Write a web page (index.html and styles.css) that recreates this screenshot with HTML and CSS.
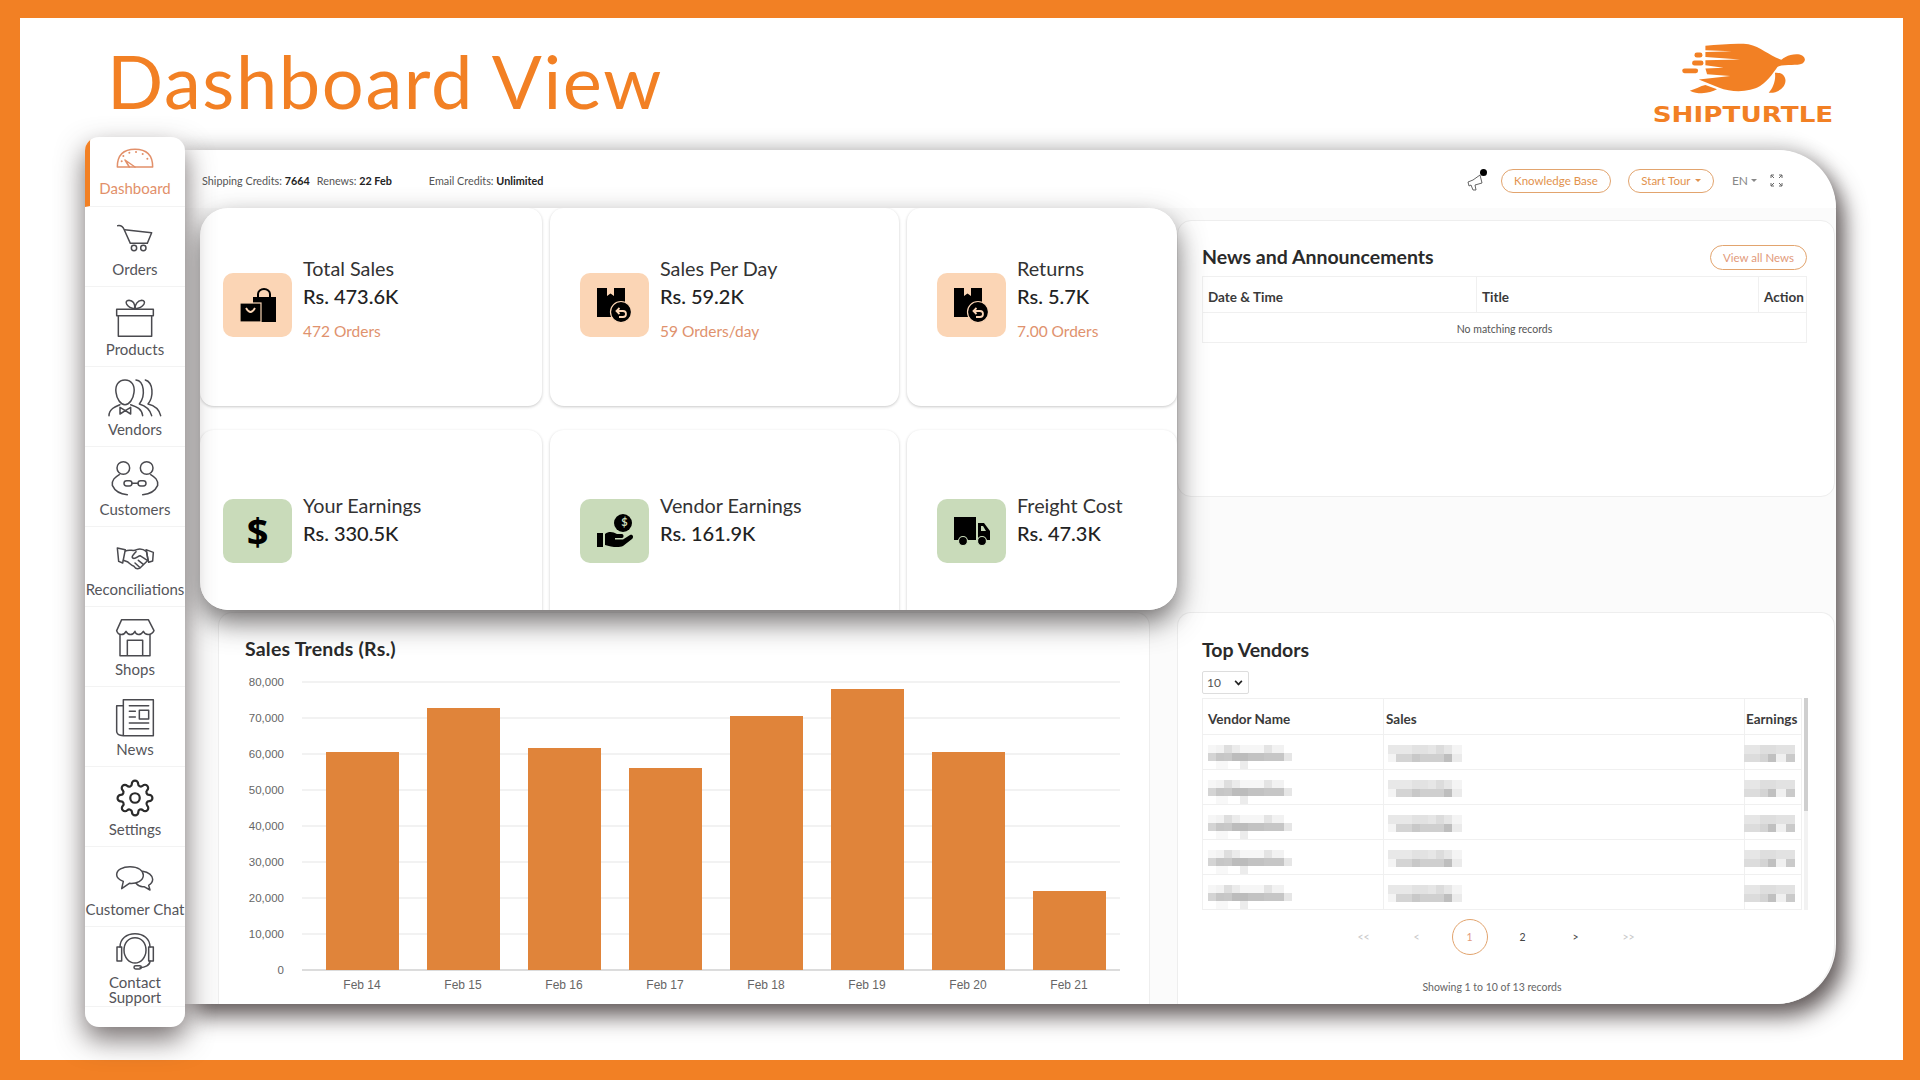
FILE: index.html
```html
<!DOCTYPE html>
<html lang="en">
<head>
    <meta charset="UTF-8">
    <title>Dashboard View</title>
    <link rel="stylesheet" href="styles.css">
</head>
<body>
<svg class="defs" width="0" height="0">
    <symbol id="blur-name" viewBox="0 0 84 24">
        <rect x="0" width="8" height="8" fill="#f6f6f6"/><rect x="8" width="8" height="8" fill="#f2f2f2"/><rect x="16" width="8" height="8" fill="#dedede"/><rect x="24" width="8" height="8" fill="#ebebeb"/><rect x="32" width="24" height="8" fill="#f6f6f6"/><rect x="56" width="8" height="8" fill="#e4e4e4"/><rect x="64" width="12" height="8" fill="#f2f2f2"/>
        <rect x="0" y="8" width="8" height="8" fill="#d4d4d4"/><rect x="8" y="8" width="8" height="8" fill="#c6c6c6"/><rect x="16" y="8" width="8" height="8" fill="#c8c8c8"/><rect x="24" y="8" width="16" height="8" fill="#bcbcbc"/><rect x="40" y="8" width="16" height="8" fill="#c2c2c2"/><rect x="56" y="8" width="20" height="8" fill="#c6c6c6"/><rect x="76" y="8" width="8" height="8" fill="#e6e6e6"/>
        <rect x="8" y="16" width="12" height="8" fill="#f8f8f8"/><rect x="32" y="16" width="8" height="8" fill="#ececec"/>
    </symbol>
    <symbol id="blur-sales" viewBox="0 0 74 17">
        <rect x="0" width="24" height="9" fill="#e8e8e8"/><rect x="24" width="16" height="9" fill="#e2e2e2"/><rect x="40" width="8" height="9" fill="#e6e6e6"/><rect x="48" width="8" height="9" fill="#dcdcdc"/><rect x="56" width="8" height="9" fill="#e6e6e6"/><rect x="64" width="10" height="9" fill="#f4f4f4"/>
        <rect x="0" y="9" width="8" height="8" fill="#f4f4f4"/><rect x="8" y="9" width="16" height="8" fill="#d4d4d4"/><rect x="24" y="9" width="8" height="8" fill="#c8c8c8"/><rect x="32" y="9" width="24" height="8" fill="#cfcfcf"/><rect x="56" y="9" width="8" height="8" fill="#bebebe"/><rect x="64" y="9" width="10" height="8" fill="#ebebeb"/>
    </symbol>
    <symbol id="blur-earn" viewBox="0 0 51 17">
        <rect x="0" width="16" height="9" fill="#e6e6e6"/><rect x="16" width="16" height="9" fill="#dedede"/><rect x="32" width="19" height="9" fill="#e2e2e2"/>
        <rect x="0" y="9" width="16" height="8" fill="#dcdcdc"/><rect x="16" y="9" width="8" height="8" fill="#d4d4d4"/><rect x="24" y="9" width="8" height="8" fill="#c0c0c0"/><rect x="32" y="9" width="10" height="8" fill="#f0f0f0"/><rect x="42" y="9" width="9" height="8" fill="#cacaca"/>
    </symbol>
</svg>

<div class="frame">
    <div class="stage">
        <!-- Heading and logo -->
        <header class="head">
            <h1 class="page-title">Dashboard View</h1>
            <div class="logo">
                <svg class="logo-mark" viewBox="840 125 380 160">
                    <path class="logo-fill" d="M915 136 C960 133 1010 128 1045 132 C1085 140 1110 170 1150 180 C1125 205 1115 235 1080 258 C1050 275 1000 280 955 262 L895 238 L990 228 L920 222 L915 205 L970 203 L915 195 L915 180 L1020 178 L915 170 L915 155 L995 153 L915 150 Z"/>
                    <path class="logo-fill" d="M1130 200 C1140 175 1165 160 1195 162 C1215 165 1222 180 1208 190 C1190 198 1160 190 1130 200 Z"/>
                    <path class="logo-fill" d="M1125 218 C1150 215 1165 235 1152 258 C1140 275 1120 280 1106 278 C1120 262 1128 240 1125 218 Z"/>
                    <path class="logo-fill" d="M868 272 C885 268 900 258 915 255 L950 268 C930 280 895 285 868 272 Z"/>
                    <rect class="logo-fill" x="882" y="157" width="24" height="15" rx="7"/>
                    <rect class="logo-fill" x="875" y="181" width="34" height="15" rx="7"/>
                    <rect class="logo-fill" x="845" y="205" width="48" height="14" rx="7"/>
                </svg>
                <div class="logo-text">SHIPTURTLE</div>
            </div>
        </header>

        <div class="workspace">
            <!-- Sidebar -->
            <nav class="sidebar">
                <a class="nav-item active">
                    <svg class="nav-icon gauge" viewBox="132 15 126 126">
                        <path d="M142 105 Q142 52 195 52 Q248 52 248 105 Z"/>
                        <path d="M165 84 L195 105 M178 105 L165 84"/>
                        <path class="dots" d="M160 72 h.1 M178 62 h.1 M198 60 h.1 M218 66 h.1 M232 80 h.1 M155 88 h.1"/>
                    </svg>
                    <span>Dashboard</span>
                </a>
                <a class="nav-item">
                    <svg class="nav-icon" viewBox="132 259 126 126">
                        <path d="M143 285 C155 283 160 290 163 298 L181 338 L232 338"/>
                        <path d="M164 297 L245 306 L232 338"/>
                        <circle cx="192" cy="352" r="8"/><circle cx="220" cy="352" r="8"/>
                    </svg>
                    <span>Orders</span>
                </a>
                <a class="nav-item">
                    <svg class="nav-icon" viewBox="132 499 126 126">
                        <path d="M140 536 H250 V555 H140 Z M145 555 V617 H245 V555"/>
                        <path d="M195 534 C170 532 160 510 177 509 C190 510 195 522 195 534 C195 522 202 510 215 509 C232 510 222 532 195 534 Z"/>
                    </svg>
                    <span>Products</span>
                </a>
                <a class="nav-item">
                    <svg class="nav-icon spill" viewBox="132 739 126 126">
                        <path d="M165 748 C145 748 135 765 138 785 C140 805 152 822 165 822 C178 822 190 805 192 785 C195 765 185 748 165 748 Z"/>
                        <path d="M117 855 C117 835 135 828 150 822 M182 822 C200 828 216 835 218 855"/>
                        <path d="M150 830 L166 840 L182 830 V850 L166 840 L150 850 Z"/>
                        <path d="M198 748 C222 750 228 795 208 820 C225 825 240 835 245 855"/>
                        <path d="M226 748 C250 755 252 798 234 820 C255 825 268 838 272 855"/>
                    </svg>
                    <span>Vendors</span>
                </a>
                <a class="nav-item">
                    <svg class="nav-icon spill" viewBox="132 987 126 126">
                        <circle cx="160" cy="1020" r="19"/><circle cx="230" cy="1020" r="19"/>
                        <path d="M148 1040 C135 1048 125 1055 127 1072 C135 1090 150 1098 172 1100"/>
                        <path d="M242 1040 C255 1048 265 1055 263 1072 C255 1090 240 1098 218 1100"/>
                        <rect x="162" y="1058" width="24" height="16" rx="8"/><rect x="204" y="1058" width="24" height="16" rx="8"/>
                        <path d="M186 1066 H204"/>
                    </svg>
                    <span>Customers</span>
                </a>
                <a class="nav-item">
                    <svg class="nav-icon" viewBox="132 22 126 126">
                        <path d="M142 55 L166 60 L158 100 L146 95 Z M250 68 L228 60 L236 98 L248 94 Z"/>
                        <path d="M166 64 C180 58 190 66 200 60 C212 55 222 60 230 66 L234 92 L210 115 C200 120 195 115 192 110 C185 108 180 102 172 96 L160 92"/>
                        <path d="M198 66 C190 75 182 82 190 86 C198 88 205 78 210 78 L232 92 M205 92 L220 104 M195 100 L208 112"/>
                    </svg>
                    <span>Reconciliations</span>
                </a>
                <a class="nav-item">
                    <svg class="nav-icon" viewBox="132 262 126 126">
                        <path d="M155 270 H235 L252 303 C245 318 225 318 220 305 C212 318 198 318 195 305 C188 318 175 318 168 305 C162 318 145 318 140 303 Z"/>
                        <path d="M150 315 V378 H240 V315 M172 378 V332 H218 V378"/>
                    </svg>
                    <span>Shops</span>
                </a>
                <a class="nav-item">
                    <svg class="nav-icon" viewBox="132 502 126 126">
                        <path d="M160 618 H250 V510 H160 Z M160 528 H140 V605 Q140 618 160 618"/>
                        <path d="M178 528 H236 M178 545 H196 M178 562 H196 M178 580 H236 M178 597 H236"/>
                        <rect x="208" y="542" width="28" height="26"/>
                    </svg>
                    <span>News</span>
                </a>
                <a class="nav-item">
                    <svg class="nav-icon gear" viewBox="0 0 24 24">
                        <circle cx="12" cy="12" r="3"/>
                        <path d="M19.4 15a1.65 1.65 0 0 0 .33 1.82l.06.06a2 2 0 0 1 0 2.83 2 2 0 0 1-2.83 0l-.06-.06a1.65 1.65 0 0 0-1.82-.33 1.65 1.65 0 0 0-1 1.51V21a2 2 0 0 1-2 2 2 2 0 0 1-2-2v-.09A1.65 1.65 0 0 0 9 19.4a1.65 1.65 0 0 0-1.82.33l-.06.06a2 2 0 0 1-2.83 0 2 2 0 0 1 0-2.83l.06-.06a1.65 1.65 0 0 0 .33-1.82 1.65 1.65 0 0 0-1.51-1H3a2 2 0 0 1-2-2 2 2 0 0 1 2-2h.09A1.65 1.65 0 0 0 4.6 9a1.65 1.65 0 0 0-.33-1.82l-.06-.06a2 2 0 0 1 0-2.83 2 2 0 0 1 2.83 0l.06.06a1.65 1.65 0 0 0 1.82.33H9a1.65 1.65 0 0 0 1-1.51V3a2 2 0 0 1 2-2 2 2 0 0 1 2 2v.09a1.65 1.65 0 0 0 1 1.51 1.65 1.65 0 0 0 1.82-.33l.06-.06a2 2 0 0 1 2.83 0 2 2 0 0 1 0 2.83l-.06.06a1.65 1.65 0 0 0-.33 1.82V9a1.65 1.65 0 0 0 1.51 1H21a2 2 0 0 1 2 2 2 2 0 0 1-2 2h-.09a1.65 1.65 0 0 0-1.51 1z"/>
                    </svg>
                    <span>Settings</span>
                </a>
                <a class="nav-item">
                    <svg class="nav-icon" viewBox="132 977 126 126">
                        <path d="M180 1006 C205 1006 220 1018 220 1032 C220 1048 200 1058 178 1056 L155 1072 L160 1050 C148 1045 140 1038 140 1030 C140 1016 158 1006 180 1006 Z"/>
                        <path d="M218 1020 C235 1022 248 1032 248 1044 C248 1052 243 1058 236 1062 L240 1076 L222 1066 C212 1068 205 1064 198 1056"/>
                    </svg>
                    <span>Customer Chat</span>
                </a>
                <a class="nav-item contact">
                    <svg class="nav-icon" viewBox="132 1202 126 126">
                        <path d="M195 1222 C175 1222 162 1238 162 1260 C162 1282 178 1298 195 1298 C212 1298 228 1282 228 1260 C228 1238 215 1222 195 1222 Z"/>
                        <path d="M150 1250 C150 1225 170 1210 195 1210 C220 1210 240 1225 240 1250"/>
                        <rect x="141" y="1250" width="14" height="42"/><rect x="236" y="1250" width="14" height="42"/>
                        <path d="M240 1292 C240 1305 225 1312 210 1312"/>
                        <rect x="192" y="1306" width="22" height="10" rx="5"/>
                    </svg>
                    <span>Contact<br>Support</span>
                </a>
            </nav>

            <!-- Main panel -->
            <main class="panel">
                <div class="topbar">
                    <div class="credits">
                        <span>Shipping Credits: <b>7664</b></span>
                        <span>Renews: <b>22 Feb</b></span>
                        <span class="email-credits">Email Credits: <b>Unlimited</b></span>
                    </div>
                    <div class="top-actions">
                        <span class="megaphone">
                            <svg viewBox="0 0 20 20" width="20" height="20">
                                <path d="M1 11 L6 9 L13 4 L15 12 L8 14 L9 19 L6 19 L4 14 L2 15 Z"/>
                            </svg>
                            <i class="dot"></i>
                        </span>
                        <a class="pill kb">Knowledge Base</a>
                        <a class="pill tour">Start Tour <i class="caret"></i></a>
                        <span class="lang">EN <i class="caret"></i></span>
                        <svg class="expand" viewBox="0 0 13 13" width="13" height="13">
                            <path d="M1 4 V1 H4 M9 1 H12 V4 M1 9 V12 H4 M12 9 V12 H9 M1 1 L4 4 M12 1 L9 4 M1 12 L4 9 M12 12 L9 9"/>
                        </svg>
                    </div>
                </div>

                <div class="panel-body">
                    <div class="left-col">
                        <section class="card chart-card">
                            <h2 class="card-title">Sales Trends (Rs.)</h2>
                            <svg class="chart" viewBox="218 664 932 340" width="932" height="340">
                                <g class="grid">
                                    <path d="M302 682 H1120 M302 718 H1120 M302 754 H1120 M302 790 H1120 M302 826 H1120 M302 862 H1120 M302 898 H1120 M302 934 H1120"/>
                                </g>
                                <path class="baseline" d="M302 970 H1120"/>
                                <g class="y-labels">
                                    <text x="284" y="686">80,000</text>
                                    <text x="284" y="722">70,000</text>
                                    <text x="284" y="758">60,000</text>
                                    <text x="284" y="794">50,000</text>
                                    <text x="284" y="830">40,000</text>
                                    <text x="284" y="866">30,000</text>
                                    <text x="284" y="902">20,000</text>
                                    <text x="284" y="938">10,000</text>
                                    <text x="284" y="974">0</text>
                                </g>
                                <g class="bars">
                                    <rect x="326" y="752" width="73" height="218"/>
                                    <rect x="427" y="708" width="73" height="262"/>
                                    <rect x="528" y="748" width="73" height="222"/>
                                    <rect x="629" y="768" width="73" height="202"/>
                                    <rect x="730" y="716" width="73" height="254"/>
                                    <rect x="831" y="689" width="73" height="281"/>
                                    <rect x="932" y="752" width="73" height="218"/>
                                    <rect x="1033" y="891" width="73" height="79"/>
                                </g>
                                <g class="x-labels">
                                    <text x="362" y="989">Feb 14</text>
                                    <text x="463" y="989">Feb 15</text>
                                    <text x="564" y="989">Feb 16</text>
                                    <text x="665" y="989">Feb 17</text>
                                    <text x="766" y="989">Feb 18</text>
                                    <text x="867" y="989">Feb 19</text>
                                    <text x="968" y="989">Feb 20</text>
                                    <text x="1069" y="989">Feb 21</text>
                                </g>
                            </svg>
                        </section>
                    </div>

                    <div class="right-col">
                        <section class="card news-card">
                            <div class="news-head">
                                <h2 class="card-title">News and Announcements</h2>
                                <a class="pill view-all">View all News</a>
                            </div>
                            <table class="news-table">
                                <tr>
                                    <th class="col-date">Date &amp; Time</th>
                                    <th class="col-title">Title</th>
                                    <th>Action</th>
                                </tr>
                                <tr>
                                    <td colspan="3">No matching records</td>
                                </tr>
                            </table>
                        </section>

                        <section class="card vendors-card">
                            <h2 class="card-title">Top Vendors</h2>
                            <div class="page-size">10 <i class="chevron"></i></div>
                            <div class="vendor-scroll">
                                <div class="vendor-clip">
                                    <table class="vendor-table">
                                        <tr><th class="col-vendor">Vendor Name</th><th class="col-sales">Sales</th><th>Earnings</th></tr>
                                        <tr><td><svg class="blur-a"><use href="#blur-name"/></svg></td><td><svg class="blur-b"><use href="#blur-sales"/></svg></td><td><svg class="blur-c"><use href="#blur-earn"/></svg></td></tr>
                                        <tr><td><svg class="blur-a"><use href="#blur-name"/></svg></td><td><svg class="blur-b"><use href="#blur-sales"/></svg></td><td><svg class="blur-c"><use href="#blur-earn"/></svg></td></tr>
                                        <tr><td><svg class="blur-a"><use href="#blur-name"/></svg></td><td><svg class="blur-b"><use href="#blur-sales"/></svg></td><td><svg class="blur-c"><use href="#blur-earn"/></svg></td></tr>
                                        <tr><td><svg class="blur-a"><use href="#blur-name"/></svg></td><td><svg class="blur-b"><use href="#blur-sales"/></svg></td><td><svg class="blur-c"><use href="#blur-earn"/></svg></td></tr>
                                        <tr><td><svg class="blur-a"><use href="#blur-name"/></svg></td><td><svg class="blur-b"><use href="#blur-sales"/></svg></td><td><svg class="blur-c"><use href="#blur-earn"/></svg></td></tr>
                                        <tr><td></td><td></td><td></td></tr>
                                    </table>
                                </div>
                                <div class="scroll-track"><div class="scroll-thumb"></div></div>
                            </div>
                            <div class="pager">
                                <span class="off">&lt;&lt;</span>
                                <span class="off">&lt;</span>
                                <span class="current">1</span>
                                <span>2</span>
                                <span>&gt;</span>
                                <span class="off">&gt;&gt;</span>
                            </div>
                            <p class="records">Showing 1 to 10 of 13 records</p>
                        </section>
                    </div>
                </div>

                <!-- Stat cards sit on top of the panel -->
                <div class="stats">
                    <div class="stat">
                        <div class="stat-icon peach">
                            <svg viewBox="0 0 36 34" width="36" height="34">
                                <rect x="13" y="9" width="23" height="25"/>
                                <path class="thin" d="M18 10 V6 a6 5 0 0 1 12 0 V10"/>
                                <rect class="ring" x="0" y="15" width="21" height="19"/>
                                <path class="cut" d="M6 20 q4.5 8 9 0"/>
                            </svg>
                        </div>
                        <div class="stat-text">
                            <div class="stat-name">Total Sales</div>
                            <div class="stat-value">Rs. 473.6K</div>
                            <div class="stat-sub">472 Orders</div>
                        </div>
                    </div>
                    <div class="stat">
                        <div class="stat-icon peach">
                            <svg viewBox="0 0 36 36" width="36" height="36">
                                <path d="M0 1 H28 V30 H0 Z"/>
                                <path class="cut-fill" d="M10 1 H17 V9 L13.5 6.5 L10 9 Z"/>
                                <circle class="ring" cx="24" cy="25" r="10.5"/>
                                <path class="cut" d="M19.5 24 H26 a3 3 0 0 1 0 6 H22 M22.5 21 L19.5 24 L22.5 27"/>
                            </svg>
                        </div>
                        <div class="stat-text">
                            <div class="stat-name">Sales Per Day</div>
                            <div class="stat-value">Rs. 59.2K</div>
                            <div class="stat-sub">59 Orders/day</div>
                        </div>
                    </div>
                    <div class="stat">
                        <div class="stat-icon peach">
                            <svg viewBox="0 0 36 36" width="36" height="36">
                                <path d="M0 1 H28 V30 H0 Z"/>
                                <path class="cut-fill" d="M10 1 H17 V9 L13.5 6.5 L10 9 Z"/>
                                <circle class="ring" cx="24" cy="25" r="10.5"/>
                                <path class="cut" d="M19.5 24 H26 a3 3 0 0 1 0 6 H22 M22.5 21 L19.5 24 L22.5 27"/>
                            </svg>
                        </div>
                        <div class="stat-text">
                            <div class="stat-name">Returns</div>
                            <div class="stat-value">Rs. 5.7K</div>
                            <div class="stat-sub">7.00 Orders</div>
                        </div>
                    </div>
                    <div class="stat lower">
                        <div class="stat-icon green"><span class="dollar">$</span></div>
                        <div class="stat-text">
                            <div class="stat-name">Your Earnings</div>
                            <div class="stat-value">Rs. 330.5K</div>
                        </div>
                    </div>
                    <div class="stat lower">
                        <div class="stat-icon green">
                            <svg class="hand" viewBox="0 0 36 34" width="36" height="34">
                                <circle cx="26" cy="9" r="9"/>
                                <path d="M0 19 H6 V33 H0 Z"/>
                                <path d="M8 20 C12 17 16 18 20 20 H25 C27 20 27 24 25 24 H18 V25.5 H26 L33 21 C36 20 37 23 35 25 L26 32 C22 34 14 33 8 31 Z"/>
                            </svg>
                            <span class="coin-mark">$</span>
                        </div>
                        <div class="stat-text">
                            <div class="stat-name">Vendor Earnings</div>
                            <div class="stat-value">Rs. 161.9K</div>
                        </div>
                    </div>
                    <div class="stat lower">
                        <div class="stat-icon green">
                            <svg viewBox="0 0 36 29" width="36" height="29">
                                <path d="M0 0 H22 V23 H0 Z"/>
                                <path d="M24 6 H30 L36 14 V23 H24 Z"/>
                                <path class="cut-fill" d="M27 9 H29 L32 14 H27 Z"/>
                                <circle class="ring" cx="9" cy="24" r="4.5"/>
                                <circle class="ring" cx="28" cy="24" r="4.5"/>
                            </svg>
                        </div>
                        <div class="stat-text">
                            <div class="stat-name">Freight Cost</div>
                            <div class="stat-value">Rs. 47.3K</div>
                        </div>
                    </div>
                </div>
            </main>
        </div>
    </div>
</div>
</body>
</html>
```

FILE: styles.css
```css
/* Reset */
html, body {
    margin: 0;
    padding: 0;
    width: 1920px;
    height: 1080px;
    overflow: hidden;
    font-family: Lato, "Liberation Sans", sans-serif;
    color: #333;
}

h1, h2, p {
    margin: 0;
}

.defs {
    position: absolute;
}

/* Orange frame */
.frame {
    box-sizing: border-box;
    width: 1920px;
    height: 1080px;
    padding: 18px 17px 20px 20px;
    background: #f28024;
}

.stage {
    height: 100%;
    background: #fff;
    display: flex;
    flex-direction: column;
}

/* Heading */
.head {
    height: 132px;
    flex: none;
    display: flex;
    justify-content: space-between;
    align-items: flex-start;
    padding: 0 70px 0 87px;
}

.page-title {
    font-size: 74px;
    line-height: 84px;
    margin-top: 21px;
    font-weight: 400;
    letter-spacing: 1.6px;
    color: #f28024;
}

.logo {
    width: 180px;
    padding-top: 24px;
    display: flex;
    flex-direction: column;
    align-items: center;
}

.logo-mark {
    width: 127px;
    height: 53px;
    display: block;
}

.logo-fill {
    fill: #f28024;
}

.logo-text {
    font-family: "DejaVu Sans", sans-serif;
    font-weight: 700;
    font-size: 21.5px;
    line-height: 22px;
    margin-top: 9px;
    color: #f28024;
    white-space: nowrap;
    transform: scaleX(1.22);
}

/* Workspace */
.workspace {
    display: flex;
    margin-left: 65px;
    height: 854px;
}

/* Sidebar */
.sidebar {
    position: relative;
    z-index: 3;
    flex: none;
    box-sizing: border-box;
    width: 100px;
    height: 890px;
    margin-top: -13px;
    background: #fff;
    border-radius: 14px;
    box-shadow: 0 12px 28px rgba(60, 50, 50, 0.7);
    overflow: hidden;
}

.nav-item {
    box-sizing: border-box;
    height: 80px;
    padding-top: 10px;
    display: flex;
    flex-direction: column;
    align-items: center;
    border-bottom: 1px solid #f3f3f3;
    font-size: 15px;
    line-height: 16px;
    color: #55555a;
    text-align: center;
    white-space: nowrap;
}

.nav-item span {
    margin-top: 2px;
}

.nav-item.active {
    height: 70px;
    padding-top: 0;
    color: #e2906a;
    border-left: 5px solid #f28024;
    border-top-left-radius: 6px;
    padding-right: 5px;
}

.nav-item.active span {
    margin-top: 1px;
}

.nav-item.contact {
    padding-top: 4px;
}

.nav-item.contact span {
    line-height: 15px;
}

.nav-icon {
    width: 42px;
    height: 42px;
    flex: none;
    fill: none;
    stroke: #4a4a4f;
    stroke-width: 4.5;
    stroke-linejoin: round;
    stroke-linecap: round;
}

.nav-icon.spill {
    overflow: visible;
}

.nav-icon.gauge {
    stroke: #e2906a;
}

.nav-icon.gauge .dots {
    stroke-width: 6;
}

.nav-icon.gear {
    box-sizing: border-box;
    stroke: #2b2b2b;
    stroke-width: 1.4;
    padding: 2px;
}

/* Main panel */
.panel {
    position: relative;
    flex: none;
    width: 1651px;
    height: 854px;
    background: #fbfbfb;
    border-radius: 0 60px 60px 0;
    box-shadow: 8px 12px 22px rgba(60, 50, 50, 0.8), 0 -6px 18px rgba(0, 0, 0, 0.14);
}

.topbar {
    box-sizing: border-box;
    height: 58px;
    padding: 3px 53px 0 17px;
    background: #fff;
    border-radius: 0 60px 0 0;
    display: flex;
    justify-content: space-between;
    align-items: center;
    font-size: 10.8px;
    color: #555;
}

.credits {
    display: flex;
    gap: 7px;
}

.credits b {
    color: #222;
}

.email-credits {
    margin-left: 30px;
}

.top-actions {
    display: flex;
    align-items: center;
}

.megaphone {
    position: relative;
    width: 20px;
    height: 20px;
    margin-right: 14px;
}

.megaphone svg {
    fill: none;
    stroke: #555;
    stroke-width: 0.9;
    display: block;
}

.dot {
    position: absolute;
    right: 0;
    top: -2px;
    width: 7px;
    height: 7px;
    border-radius: 50%;
    background: #000;
}

.pill {
    box-sizing: border-box;
    display: flex;
    align-items: center;
    justify-content: center;
    height: 24px;
    border: 1px solid #e2a46e;
    border-radius: 13px;
    color: #e2924d;
    font-size: 11.5px;
}

.pill.kb {
    width: 110px;
}

.pill.tour {
    width: 86px;
    margin-left: 17px;
    gap: 4px;
}

.caret {
    display: inline-block;
    border-top: 3px solid currentColor;
    border-left: 3px solid transparent;
    border-right: 3px solid transparent;
}

.lang {
    margin-left: 18px;
    font-size: 12px;
    color: #888;
    display: flex;
    align-items: center;
    gap: 3px;
}

.expand {
    margin-left: 13px;
    fill: none;
    stroke: #666;
    stroke-width: 1;
}

/* Panel body */
.panel-body {
    display: flex;
    height: 796px;
}

.left-col {
    flex: none;
    width: 992px;
    display: flex;
    flex-direction: column;
    justify-content: flex-end;
    padding-left: 33px;
    box-sizing: border-box;
}

.right-col {
    flex: none;
    width: 658px;
    display: flex;
    flex-direction: column;
    justify-content: space-between;
    padding-top: 12px;
    box-sizing: border-box;
}

.card {
    box-sizing: border-box;
    background: #fff;
    border: 1px solid #eee;
    border-radius: 14px;
}

.card-title {
    font-size: 19.5px;
    line-height: 20px;
    font-weight: 700;
    color: #2a2a2a;
}

.chart-card {
    width: 932px;
    height: 392px;
    padding-top: 26px;
    border-bottom: 0;
    border-radius: 14px 14px 0 0;
}

.chart-card .card-title {
    padding-left: 26px;
    margin-bottom: 5px;
    letter-spacing: 0.2px;
}

.chart {
    display: block;
    margin-left: -1px;
}

.grid path {
    stroke: #eeeeee;
    stroke-width: 1.5;
    fill: none;
}

.baseline {
    stroke: #d0d0d0;
    stroke-width: 1.5;
}

.bars rect {
    fill: #e0843a;
}

.y-labels text,
.x-labels text {
    font-family: "Liberation Sans", Arial, sans-serif;
    fill: #666;
}

.y-labels text {
    font-size: 11.5px;
    text-anchor: end;
}

.x-labels text {
    font-size: 12px;
    text-anchor: middle;
}

/* News */
.news-card {
    height: 277px;
    padding: 22px 27px 0 24px;
}

.news-head {
    display: flex;
    justify-content: space-between;
    align-items: center;
    height: 28px;
    margin-bottom: 5px;
}

.view-all {
    width: 97px;
    height: 25px;
    font-size: 11.5px;
    color: #e29a7a;
}

.news-table,
.vendor-table {
    width: 100%;
    border-collapse: collapse;
    table-layout: fixed;
}

.news-table th,
.news-table td,
.vendor-table th,
.vendor-table td {
    border: 1px solid #f0f0f0;
    padding: 0 5px;
    text-align: left;
}

.news-table th,
.vendor-table th {
    font-size: 13.5px;
    font-weight: 700;
    color: #3a3a3a;
    height: 30px;
    padding-top: 5px;
}

.news-table td {
    height: 30px;
    padding-top: 3px;
    box-sizing: border-box;
    font-size: 10.5px;
    text-align: center;
    color: #555;
}

.col-date {
    width: 263px;
}

.col-title {
    width: 271px;
}

/* Top vendors */
.vendors-card {
    height: 392px;
    padding: 27px 0 0 24px;
    border-bottom: 0;
    border-radius: 14px 14px 60px 0;
}

.page-size {
    box-sizing: border-box;
    width: 47px;
    height: 23px;
    margin-top: 11px;
    padding-left: 4px;
    border: 1px solid #ddd;
    border-radius: 2px;
    display: flex;
    align-items: center;
    justify-content: space-between;
    font-size: 12px;
    color: #555;
}

.chevron {
    width: 5px;
    height: 5px;
    margin: -3px 6px 0 0;
    border-right: 2px solid #222;
    border-bottom: 2px solid #222;
    transform: rotate(45deg) scale(0.8);
}

.vendor-scroll {
    display: flex;
    gap: 2px;
    margin-top: 4px;
    height: 212px;
}

.vendor-clip {
    width: 600px;
    height: 212px;
    overflow: hidden;
}

.vendor-table td {
    height: 33px;
    vertical-align: top;
    padding-top: 10px;
    box-sizing: border-box;
}

.vendor-table th {
    border-top: 1px solid #f0f0f0;
}

.vendor-table th + th {
    padding-left: 2px;
}

.vendor-table th:last-child {
    padding-left: 1px;
}

.col-vendor {
    width: 170px;
}

.col-sales {
    width: 353px;
}

.blur-a {
    display: block;
    width: 84px;
    height: 24px;
}

.blur-b {
    display: block;
    width: 74px;
    height: 17px;
    margin-left: -1px;
}

.blur-c {
    display: block;
    width: 51px;
    height: 17px;
    margin-left: -6px;
}

.scroll-track {
    width: 4px;
    height: 212px;
    background: #f2f2f2;
}

.scroll-thumb {
    height: 113px;
    background: #cfcfcf;
}

.pager {
    display: flex;
    justify-content: center;
    align-items: center;
    width: 531px;
    margin: 9px 0 0 0;
    height: 36px;
    padding-left: 57px;
    box-sizing: border-box;
    font-size: 10.5px;
    color: #444;
}

.pager span {
    width: 53px;
    height: 36px;
    display: flex;
    align-items: center;
    justify-content: center;
}

.pager .off {
    color: #c8c8c8;
}

.pager .current {
    width: 36px;
    margin: 0 8.5px;
    box-sizing: border-box;
    border: 1px solid #e2a46e;
    border-radius: 50%;
    color: #e29a7a;
}

.records {
    margin-top: 26px;
    width: 580px;
    text-align: center;
    font-size: 10.5px;
    color: #666;
}

/* Stat cards */
.stats {
    position: absolute;
    left: 15px;
    top: 58px;
    width: 977px;
    height: 402px;
    overflow: hidden;
    background: #fff;
    border-radius: 28px;
    box-shadow: 0 12px 28px rgba(50, 45, 45, 0.7);
    display: grid;
    grid-template-columns: 342px 349px 270px;
    grid-template-rows: 198px 200px;
    column-gap: 8px;
    row-gap: 24px;
    z-index: 2;
}

.stat {
    display: flex;
    align-items: center;
    padding-left: 23px;
    gap: 11px;
    background: #fff;
    border-radius: 14px;
    box-shadow: 0 1px 3px rgba(0, 0, 0, 0.22);
}

.stat:nth-child(3n+2),
.stat:nth-child(3n) {
    padding-left: 30px;
}

.stat.lower {
    align-items: flex-start;
    padding-top: 69px;
    height: 200px;
    box-sizing: border-box;
}

.stat-icon {
    position: relative;
    flex: none;
    width: 69px;
    height: 64px;
    margin-top: -4px;
    border-radius: 10px;
    display: flex;
    align-items: center;
    justify-content: center;
}

.stat.lower .stat-icon {
    margin-top: 0;
}

.stat-icon.peach {
    background: #fbd5b5;
}

.stat-icon.green {
    background: #c9dbba;
}

.stat-icon svg {
    fill: #000;
}

.stat-icon .thin {
    fill: none;
    stroke: #000;
    stroke-width: 2;
}

.stat-icon .ring {
    stroke: #fbd5b5;
    stroke-width: 1.2;
}

.stat-icon.green .ring {
    stroke: #c9dbba;
}

.stat-icon .cut {
    fill: none;
    stroke: #fbd5b5;
    stroke-width: 1.8;
}

.stat-icon .cut-fill {
    fill: #fbd5b5;
}

.stat-icon.green .cut-fill {
    fill: #c9dbba;
}

.dollar {
    font-size: 38px;
    font-weight: 700;
    color: #000;
    font-family: "Open Sans", sans-serif;
    line-height: 1;
}

.coin-mark {
    position: absolute;
    left: 40.5px;
    top: 16.5px;
    width: 8px;
    text-align: center;
    font-size: 11px;
    line-height: 12px;
    font-weight: 700;
    color: #c9dbba;
}

.stat-text {
    margin-top: -17px;
    white-space: nowrap;
}

.stat.lower .stat-text {
    margin-top: -6px;
}

.stat-name {
    font-size: 19.8px;
    line-height: 24px;
    color: #333;
}

.stat-value {
    font-size: 20px;
    line-height: 24px;
    margin-top: 4px;
    font-weight: 500;
    color: #222;
}

.stat-sub {
    font-size: 15.5px;
    line-height: 20px;
    margin-top: 13px;
    color: #e0926e;
}
```
